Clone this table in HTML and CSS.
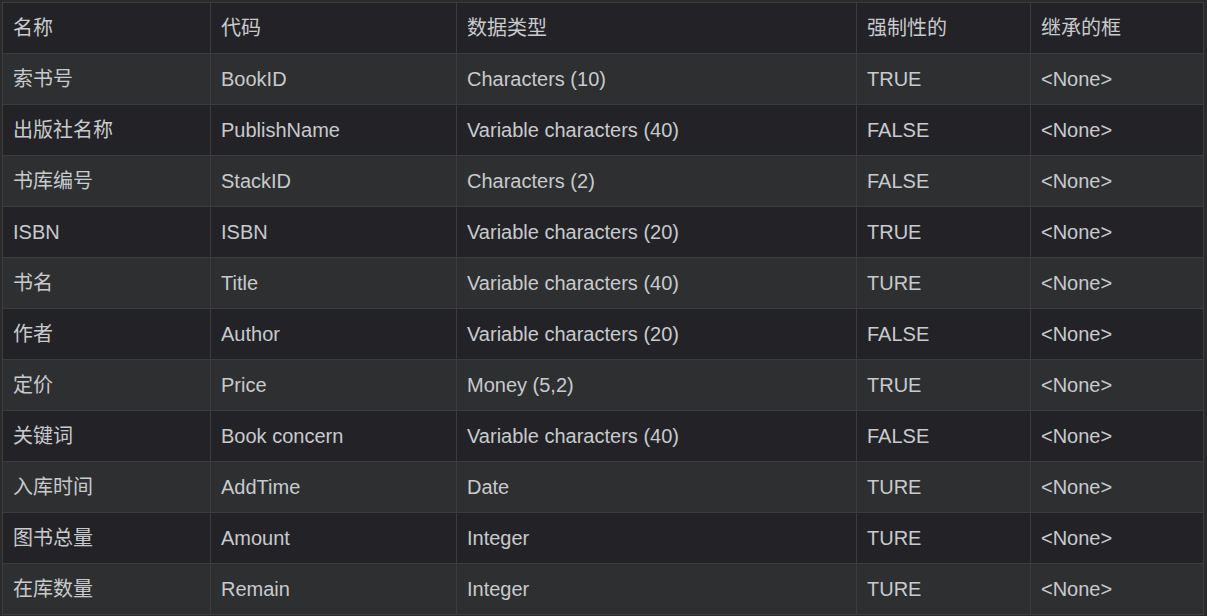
FILE: index.html
```html
<!DOCTYPE html>
<html lang="zh">
<head>
<meta charset="utf-8">
<title>表结构</title>
<link rel="stylesheet" href="styles.css">
</head>
<body>
<div class="wrap">
<table class="grid">
<colgroup>
<col class="c1"><col class="c2"><col class="c3"><col class="c4"><col class="c5">
</colgroup>
<thead>
<tr><th>名称</th><th>代码</th><th>数据类型</th><th>强制性的</th><th>继承的框</th></tr>
</thead>
<tbody>
<tr><td>索书号</td><td>BookID</td><td>Characters (10)</td><td>TRUE</td><td>&lt;None&gt;</td></tr>
<tr><td>出版社名称</td><td>PublishName</td><td>Variable characters (40)</td><td>FALSE</td><td>&lt;None&gt;</td></tr>
<tr><td>书库编号</td><td>StackID</td><td>Characters (2)</td><td>FALSE</td><td>&lt;None&gt;</td></tr>
<tr><td>ISBN</td><td>ISBN</td><td>Variable characters (20)</td><td>TRUE</td><td>&lt;None&gt;</td></tr>
<tr><td>书名</td><td>Title</td><td>Variable characters (40)</td><td>TURE</td><td>&lt;None&gt;</td></tr>
<tr><td>作者</td><td>Author</td><td>Variable characters (20)</td><td>FALSE</td><td>&lt;None&gt;</td></tr>
<tr><td>定价</td><td>Price</td><td>Money (5,2)</td><td>TRUE</td><td>&lt;None&gt;</td></tr>
<tr><td>关键词</td><td>Book concern</td><td>Variable characters (40)</td><td>FALSE</td><td>&lt;None&gt;</td></tr>
<tr><td>入库时间</td><td>AddTime</td><td>Date</td><td>TURE</td><td>&lt;None&gt;</td></tr>
<tr><td>图书总量</td><td>Amount</td><td>Integer</td><td>TURE</td><td>&lt;None&gt;</td></tr>
<tr><td>在库数量</td><td>Remain</td><td>Integer</td><td>TURE</td><td>&lt;None&gt;</td></tr>
</tbody>
</table>
</div>
</body>
</html>
```
FILE: styles.css
```css
html, body {
  margin: 0;
  padding: 0;
  background: #2b2b2b;
}
.wrap {
  padding: 2px;
}
.grid {
  border-collapse: collapse;
  table-layout: fixed;
  width: 1202px;
  font-family: "Liberation Sans", Arial, "Noto Sans CJK SC", sans-serif;
  font-size: 20px;
  color: #c8cacd;
}
.c1 { width: 208px; }
.c2 { width: 246px; }
.c3 { width: 400px; }
.c4 { width: 174px; }
.c5 { width: 173px; }
.grid th,
.grid td {
  border: 1px solid #3c3c3e;
  height: 51px;
  padding: 0 10px;
  box-sizing: border-box;
  text-align: left;
  font-weight: normal;
  white-space: nowrap;
  line-height: 24px;
}
.grid thead tr {
  background: #232327;
}
.grid tbody tr:nth-child(odd) {
  background: #2e2f31;
}
.grid tbody tr:nth-child(even) {
  background: #232327;
}
```
